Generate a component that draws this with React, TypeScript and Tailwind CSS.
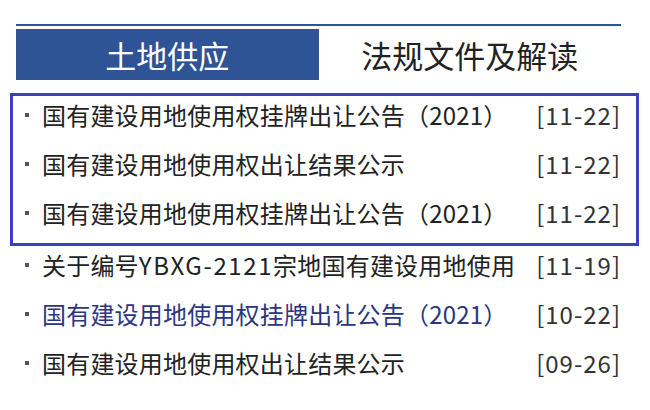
import React from "react";

type Row = { title: React.ReactNode; date: string; color?: string };

const boxed: Row[] = [
  { title: "国有建设用地使用权挂牌出让公告（2021）", date: "[11-22]" },
  { title: "国有建设用地使用权出让结果公示", date: "[11-22]" },
  { title: "国有建设用地使用权挂牌出让公告（2021）", date: "[11-22]" },
];

const rest: Row[] = [
  {
    title: (
      <>
        关于编号<span className="tracking-[1.6px]">YBXG-2121</span>宗地国有建设用地使用
      </>
    ),
    date: "[11-19]",
  },
  { title: "国有建设用地使用权挂牌出让公告（2021）", date: "[10-22]", color: "blue" },
  { title: "国有建设用地使用权出让结果公示", date: "[09-26]" },
];

function ListRow({ row }: { row: Row }) {
  return (
    <div className="flex h-[49px] items-center pb-[11px] pl-[12px] pr-[15px]">
      <span className="mr-[13px] h-[4px] w-[4px] shrink-0 bg-[#555555]" />
      <span
        className={
          row.color === "blue"
            ? "flex-1 whitespace-nowrap tracking-[0.2px] text-[#2b3580]"
            : "flex-1 whitespace-nowrap tracking-[0.2px] text-[#222222]"
        }
      >
        {row.title}
      </span>
      <span className="shrink-0 tracking-[1px] text-[#333333]">{row.date}</span>
    </div>
  );
}

export default function App() {
  return (
    <div
      className="h-[410px] w-[650px] overflow-hidden bg-white pt-[24px]"
      style={{ fontFamily: '"Noto Sans CJK SC", "Noto Sans", sans-serif' }}
    >
      <div className="ml-[16px] flex w-[605px] border-t-2 border-[#2f5496] pt-[3px]">
        <div className="flex h-[51px] w-1/2 items-center justify-center bg-[#2f5496] text-[31px] leading-none text-white">
          土地供应
        </div>
        <div className="flex h-[51px] w-1/2 items-center justify-center text-[31px] leading-none text-[#222222]">
          法规文件及解读
        </div>
      </div>
      <div className="ml-[10px] mt-[13px] w-[629px] text-[24px] leading-none">
        <div className="border-[3px] border-[#3b3fc4]">
          {boxed.map((r, i) => (
            <ListRow key={i} row={r} />
          ))}
        </div>
        <div className="px-[3px]">
          {rest.map((r, i) => (
            <ListRow key={i} row={r} />
          ))}
        </div>
      </div>
    </div>
  );
}
